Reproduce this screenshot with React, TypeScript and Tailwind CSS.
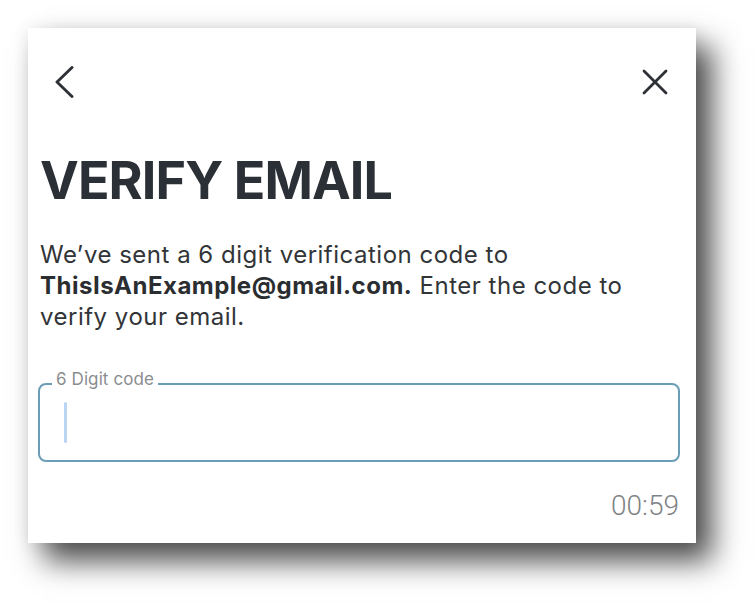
export default function App() {
  return (
    <div className="w-[754px] h-[602px] bg-white pt-[28px] pl-[28px] font-['Inter',sans-serif]">
      {/* Card */}
      <div className="w-[668px] h-[515px] bg-white flex flex-col pl-[10px] pr-[16px] shadow-[16px_18px_28px_rgba(0,0,0,0.7),0_0_16px_rgba(0,0,0,0.08)]">
        {/* Top bar */}
        <div className="flex items-center justify-between h-[30px] mt-[39px]">
          <button className="ml-[16px] w-[20px] h-[32px] flex items-center justify-center text-[#2d3136]">
            <svg width="20" height="32" viewBox="0 0 20 32" fill="none">
              <path d="M18 1.5 L3 16 L18 30.5" stroke="currentColor" strokeWidth="2.9" strokeLinecap="round" strokeLinejoin="round" />
            </svg>
          </button>
          <button className="mr-[12px] w-[26px] h-[26px] flex items-center justify-center text-[#2d3136]">
            <svg width="26" height="26" viewBox="0 0 26 26" fill="none">
              <path d="M2 2 L24 24 M24 2 L2 24" stroke="currentColor" strokeWidth="2.8" strokeLinecap="round" />
            </svg>
          </button>
        </div>

        {/* Title */}
        <h1 className="mt-[52px] text-[52px] leading-[64px] font-bold text-[#2b3036] tracking-[-0.9px] pl-[2px]">
          VERIFY EMAIL
        </h1>

        {/* Body */}
        <p className="mt-[26px] text-[24px] leading-[31px] tracking-[0.5px] text-[#323538] pl-[2px]">
          We’ve sent a 6 digit verification code to{' '}
          <span className="font-bold text-[#2b2e31]">ThisIsAnExample@gmail.com.</span> Enter the code to verify your
          email.
        </p>

        {/* Input */}
        <div className="relative mt-[51px] h-[79px] border-2 border-[#6b9db6] rounded-[8px]">
          <span className="absolute -top-[14px] left-[12px] px-[4px] bg-white text-[17px] leading-[17px] tracking-[0.1px] text-[#8a8d90]">
            6 Digit code
          </span>
          <div className="absolute left-[24px] top-[17px] w-[3px] h-[41px] rounded-full bg-[#bad6f2]" />
        </div>

        {/* Timer */}
        <div className="mt-[28px] flex justify-end pr-[1px]">
          <span className="font-['Roboto',sans-serif] font-light text-[28px] leading-[32px] text-[#808386]">00:59</span>
        </div>
      </div>
    </div>
  )
}
